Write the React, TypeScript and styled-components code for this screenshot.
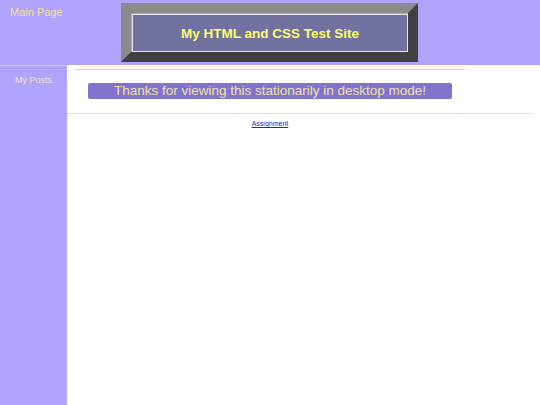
import React from 'react';
import styled, { createGlobalStyle } from 'styled-components';

const GlobalStyle = createGlobalStyle`
  html, body {
    margin: 0;
    padding: 0;
    background: #afa3fb;
    font-family: "Liberation Sans", Arial, sans-serif;
  }
`;

const Page = styled.div`
  display: flex;
  flex-direction: column;
  min-height: 405px;
`;

const Header = styled.header`
  display: flex;
  align-items: flex-start;
  height: 65px;
`;

const HomeLink = styled.a`
  display: block;
  width: 111px;
  padding: 6px 0 0 10px;
  font-size: 11px;
  color: #efe39a;
  text-decoration: none;
`;

const Banner = styled.div`
  margin-top: 3px;
  width: 277px;
  height: 39px;
  border-style: solid;
  border-width: 10px;
  border-color: #8a8a8a #404040 #404040 #8a8a8a;
  display: flex;
`;

const BannerInner = styled.h1`
  flex: 1;
  margin: 1px 0 0 1px;
  border: 1px solid #e4e4ee;
  background: #7172a0;
  display: flex;
  align-items: center;
  justify-content: center;
  font-size: 13.5px;
  font-weight: bold;
  color: #fdfd6a;
`;

const Body = styled.div`
  flex: 1;
  display: grid;
  grid-template-columns: 67px 1fr;
`;

const Sidebar = styled.nav`
  border-top: 1px solid #cfc8fd;
  display: flex;
  flex-direction: column;
  align-items: center;
  padding-top: 9px;
`;

const SideLink = styled.a`
  font-size: 9px;
  color: #ece4c4;
  text-decoration: none;
`;

const Main = styled.main`
  background: #ffffff;
  padding-top: 4px;
`;

const Column = styled.section`
  width: 390px;
  margin-left: 8px;
`;

const Rule = styled.hr<{ $wide?: boolean }>`
  margin: 0;
  border: none;
  height: 1px;
  background: ${p => (p.$wide ? '#dedede' : '#cfcfcf')};
  margin-right: ${p => (p.$wide ? '7px' : '0')};
`;

const Notice = styled.div`
  margin: 13px 13px 14px;
  height: 16px;
  border-radius: 2px;
  background: #8273cf;
  color: #ede3a2;
  font-size: 13.5px;
  line-height: 16px;
  text-align: center;
`;

const Footer = styled.div`
  padding-top: 6px;
  text-align: center;
  font-size: 7px;
`;

const FooterLink = styled.a`
  color: #2222dd;
  text-decoration: underline;
`;

export default function App() {
  return (
    <>
      <GlobalStyle />
      <Page>
        <Header>
          <HomeLink href="#">Main Page</HomeLink>
          <Banner>
            <BannerInner>My HTML and CSS Test Site</BannerInner>
          </Banner>
        </Header>
        <Body>
          <Sidebar>
            <SideLink href="#">My Posts</SideLink>
          </Sidebar>
          <Main>
            <Column>
              <Rule />
              <Notice>Thanks for viewing this stationarily in desktop mode!</Notice>
            </Column>
            <Rule $wide />
            <Column>
              <Footer>
                <FooterLink href="#">Assignment</FooterLink>
              </Footer>
            </Column>
          </Main>
        </Body>
      </Page>
    </>
  );
}
